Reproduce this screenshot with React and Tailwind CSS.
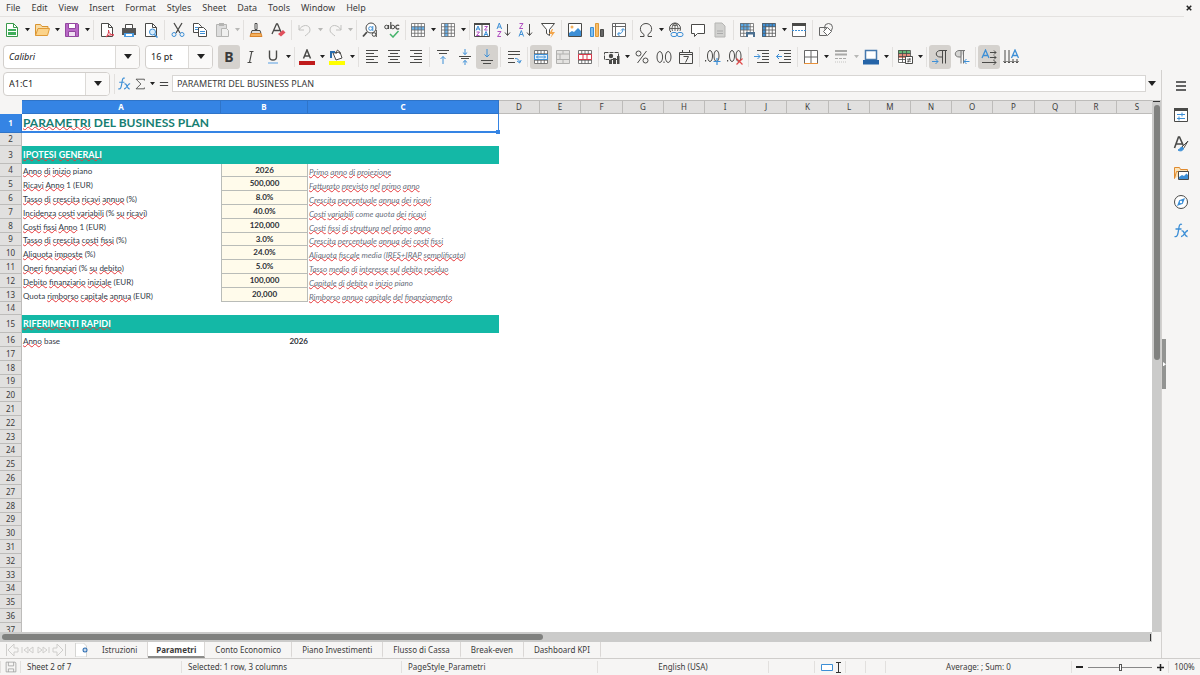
import { useState } from 'react'

const MENUS = ['File', 'Edit', 'View', 'Insert', 'Format', 'Styles', 'Sheet', 'Data', 'Tools', 'Window', 'Help']

const K = '#4a4a48' // icon outline
const B = '#3d8fd6' // icon accent

const grid = (x, y, c, r, w, h) => {
  let d = ''
  for (let i = 0; i <= c; i++) d += `M${x + i * w} ${y}v${r * h}`
  for (let i = 0; i <= r; i++) d += `M${x} ${y + i * h}h${c * w}`
  return d
}

const TABLE = grid(1.5, 1.5, 4, 4, 3.25, 3.25)

// 16x16 drawings
const ICONS = {
  new: <><path d="M2.5 1.5h7l4 4v9h-11z" fill="#fff" stroke="#3a9a4b" /><path d="M9.5 1.5v4h4" stroke="#3a9a4b" /><path d="M4 7h8v2H4zM4 10h8v3H4z" fill="#3fae5a" /></>,
  open: <><path d="M1.5 13.5V2.5h5l1.5 2h6v3" fill="#f8dca5" stroke="#d9942f" /><path d="M1.5 13.5l2.5-7h11.5l-2 7z" fill="#fbd38a" stroke="#e09a36" /></>,
  save: <><path d="M1.5 1.5h12l1 1v12h-13z" fill="#b968c7" stroke="#93479f" /><path d="M4.5 1.5h7v5h-7z" fill="#fff" stroke="#93479f" /><path d="M4.5 9.5h7v5h-7z" fill="#f0e0f3" stroke="#93479f" /></>,
  pdf: <><path d="M2.5 1.5h7l4 4v9h-11z" fill="#fff" stroke={K} /><path d="M9.5 1.5v4h4" stroke={K} /><path d="M7 15c2-2 3-5 2.5-7 0 3 2 5 5.5 5-3-.5-6 0-8 2" stroke="#d8384a" /></>,
  print: <><path d="M4.5 6V2.5h7V6" fill="#fff" stroke={K} /><path d="M1 6h14v7H1z" fill="#555" /><path d="M3 11h10v4H3z" fill="#4a9be0" /><path d="M5 12h6v2H5z" fill="#fff" /></>,
  preview: <><path d="M2.5 1.5h7l4 4v9h-11z" fill="#fff" stroke={K} /><path d="M9.5 1.5v4h4" stroke={K} /><circle cx="9.5" cy="10" r="3" fill="#d8ecfb" stroke={B} /><path d="M11.5 12.5l3 3" stroke={B} strokeWidth="1.5" /></>,
  cut: <><path d="M4 1l6 10M12 1L6 11" stroke={K} strokeWidth="1.3" /><circle cx="4" cy="12.5" r="2" stroke={B} /><circle cx="12" cy="12.5" r="2" stroke={B} /></>,
  copy: <><path d="M1.5 1.5h5l3 3v6h-8z" fill="#fff" stroke={K} /><path d="M6.5 5.5h5l3 3v6h-8z" fill="#fff" stroke={K} /><path d="M8 9.5h5M8 11.5h5M3 5.5h3M3 7.5h3" stroke={B} /></>,
  paste: <><path d="M2.5 2.5h10v12h-10z" fill="#ddd" stroke="#b5b5b3" /><path d="M5 1h5v3H5z" fill="#b5b5b3" /><path d="M7.5 6.5h5l2 2v6h-7z" fill="#f0f0ef" stroke="#b5b5b3" /></>,
  clone: <><path d="M7 1.5h2v6H7z" fill="#fff" stroke={K} /><path d="M4 8.5h8l1 3H3z" fill="#ddd" stroke={K} /><path d="M3 11.5h10l1 3H2z" fill="#f3b05d" stroke="#d9832b" /></>,
  clear: <><path d="M2 12L6.5 2h1L11 10M4 8.5h6" stroke={K} strokeWidth="1.3" /><path d="M8 12l5-4 2.5 2.5-4.5 4z" fill="#e0505c" /></>,
  undo: <path d="M2 3v5h5M2 8c3-6 11-6 11 0 0 3-3 4-5 6" stroke="#c2c2c0" />,
  redo: <path d="M14 3v5H9M14 8C11 2 3 2 3 8c0 3 3 4 5 6" stroke="#c2c2c0" />,
  find: <><circle cx="9" cy="6" r="5" fill="#fff" stroke={K} /><path d="M5 10l-4 4.5" stroke={K} strokeWidth="1.8" /><circle cx="8.5" cy="6.5" r="1.8" stroke={B} /><path d="M10.8 4v5" stroke={B} /><circle cx="12" cy="12.5" r="1.8" fill="#fff" stroke={K} /><path d="M14.3 8v7" stroke={K} /></>,
  spell: <><circle cx="2.5" cy="5" r="1.8" stroke={K} /><path d="M4.5 3v4M6.8 0v7M15.2 3.700a2 2 0 1 0 0 2.800" stroke={K} strokeWidth="1.2" /><circle cx="8.800" cy="5" r="1.800" stroke={K} /><path d="M6 12l3 3 5.500-6" stroke="#45b36b" strokeWidth="1.500" /></>,
  row: <><path d="M1 1h14v14H1z" fill="#fff" /><path d="M1.5 4.5h13v3.500h-13z" fill="#6db5ee" /><path d={TABLE} stroke="#666" strokeWidth=".8" /></>,
  col: <><path d="M1 1h14v14H1z" fill="#fff" /><path d="M4.500 1.500h3.500v13H4.500z" fill="#6db5ee" /><path d={TABLE} stroke="#666" strokeWidth=".8" /></>,
  sort: <><path d="M.5 1.500h15v13H.5zM8 3v12" fill="#fff" stroke={K} /><path d="M0 1h16v2H0z" fill={K} /><path d="M2 8.500l2-4.500 2 4.500M2.700 7h2.600M10 14l2-4.500 2 4.500M10.700 12.500h2.600" stroke={B} /><path d="M2.500 10h3l-3 3.500h3M10.500 4.500h3l-3 3.500h3" stroke="#b04fc0" /></>,
  asc: <><path d="M1 7l2.300-6L5.600 7M2 5h2.800" stroke={B} /><path d="M1.500 9.500H5l-3.500 5H5" stroke="#b04fc0" /><path d="M11.500 2v11M9 10.500l2.500 3 2.500-3" stroke={K} /></>,
  desc: <><path d="M1 14.500l2.300-6 2.300 6M2 12.500h2.800" stroke={B} /><path d="M1.500 1.500H5l-3.500 5H5" stroke="#b04fc0" /><path d="M11.500 2v11M9 10.500l2.500 3 2.500-3" stroke={K} /></>,
  filter: <><path d="M1.500 1.500h13l-5 6v6l-3-2v-4z" fill="#fff" stroke={K} /><path d="M12 7l-3 5h3l-1.500 4L15 10h-3l1-3z" fill="#f3a54a" /></>,
  image: <><path d="M1.500 1.500h13v13h-13z" fill="#fff" stroke={K} /><circle cx="5" cy="5" r="1.500" fill="#f3b05d" /><path d="M2 14v-3l3-2 2 1 4-4 3 3v5z" fill="#3d8fd6" /></>,
  chart: <><path d="M1.500 5.500h3v9h-3z" fill="#7fc0f0" stroke={B} /><path d="M6.500 1.500h3v13h-3z" fill="#f7bd6b" stroke="#e09a36" /><path d="M11.500 7.500h3v7h-3z" fill="#666" stroke={K} /></>,
  pivot: <><path d="M1.500 1.500h13v13h-13zM1.500 4.500h13M4.500 1.500v13" fill="#fff" stroke="#666" /><path d="M7 12c3 0 5-2 5-5M10 8.500l2-2 2 2M8.500 10L6.500 12l2 2" stroke={B} /></>,
  omega: <path d="M2 14.500h4v-2C0 9 2 1.500 8 1.500s8 7.500 2 11v2h4" stroke={K} />,
  link: <><circle cx="7" cy="6.500" r="5.500" stroke={K} /><path d="M1.500 6.500h11M7 1v11M3.500 2.500c2 1.500 5 1.500 7 0M7 1C3 4 3 9 7 12M7 1c4 3 4 8 0 11" stroke={K} strokeWidth=".8" /><path d="M3 9h12v6H3z" fill="#f6f5f4" /><rect x="3" y="10.500" width="6" height="4" rx="2" stroke={B} /><rect x="9" y="10.500" width="6" height="4" rx="2" stroke={B} /></>,
  comment: <path d="M1.500 2.500h13v9h-7l-3 3v-3h-3z" fill="#fff" stroke={K} />,
  header: <><path d="M3 1h7l3 3v11H3z" fill="#d2d2d0" stroke="#b5b5b3" /><path d="M5 9h6M5 11.500h6" stroke="#aaa" /></>,
  area: <><path d="M1 1h14v14H1z" fill="#fff" /><path d="M1 1h9.500v7H1z" fill="#5aa9e6" /><path d={TABLE} stroke="#666" strokeWidth=".8" /><path d="M7 10h9v5H7z" fill="#4b6f8f" /><path d="M9 12.500h5V15H9z" fill="#fff" /></>,
  freeze: <><path d="M1 1h14v14H1z" fill="#fff" /><path d="M1 1h13.500v4H5v10H1z" fill={B} /><path d={TABLE} stroke="#555" strokeWidth=".8" /></>,
  split: <><path d="M1.500 2.500h13v12h-13z" fill="#fff" stroke="#666" /><path d="M1 1h14v3H1z" fill={K} /><path d="M1 8.500h14" stroke={B} strokeDasharray="2 1" /></>,
  shapes: <><path d="M1.500 5.500h7v8h-7z" stroke="#666" /><circle cx="10.500" cy="5.500" r="4" stroke="#666" /><path d="M9.500 5.500l4 4-4 4-4-4z" fill="#fff" stroke="#666" /></>,
  italic: <path d="M6.500 2.500h4M4.500 13.500h4M8.800 2.500l-2.300 11" stroke={K} strokeWidth="1.2" />,
  underline: <><path d="M4.500 1.500V8c0 4 7 4 7 0V1.500" stroke={K} strokeWidth="1.400" /><path d="M3 14h10" stroke="#8cbbe8" strokeWidth="1.500" /></>,
  color: <><path d="M4.500 9.500L8 1l3.500 8.500M5.500 7h5" stroke={K} strokeWidth="1.500" /><path d="M0 12h16v4H0z" fill="#c01c1c" /></>,
  fill: <><path d="M4 4l7-1 2 6-6 2z" fill="#fff" stroke={K} /><path d="M7 5c0-5 3-5 4 0" stroke={K} /><path d="M2 9V3h4" stroke="#2c6fae" strokeWidth="2" /><path d="M0 12h16v4H0z" fill="#ffff00" /></>,
  left: <path d="M2 1.500h12M2 4.500h8M2 7.500h12M2 10.500h8M2 13.500h12" stroke={K} />,
  center: <path d="M2 1.500h12M4 4.500h8M2 7.500h12M4 10.500h8M2 13.500h12" stroke={K} />,
  right: <path d="M2 1.500h12M6 4.500h8M2 7.500h12M6 10.500h8M2 13.500h12" stroke={K} />,
  vtop: <><path d="M2 1.500h12M4 4.500h8" stroke={K} /><path d="M8 15V7.500M5.500 10L8 7.500l2.500 2.500" stroke={B} /></>,
  vmid: <><path d="M2 7.500h12M4 9.500h8" stroke={K} /><path d="M8 0v5.500M5.800 3.500L8 5.500l2.200-2M8 16v-4.500M5.800 13.500L8 11.500l2.200 2" stroke={B} /></>,
  vbot: <><path d="M2 11.500h12M4 14.500h8" stroke={K} /><path d="M8 0v8M5.500 5.500L8 8l2.500-2.500" stroke={B} /></>,
  wrap: <><path d="M2 2.500h12M2 5.500h12M2 9.500h6M2 13.500h7" stroke={K} /><path d="M9 9.500c3 0 4 1 4.500 4M11 12l2.700 2 1.500-3" stroke={B} /></>,
  merge: <><path d="M1 1h14v14H1z" fill="#fff" /><path d={TABLE} stroke="#555" strokeWidth=".8" /><path d="M1.500 5.500h13v5h-13z" fill="#e6f2fc" stroke={B} /><path d="M3.500 8h9M5 6.500L3.500 8 5 9.500M11 6.500L12.500 8 11 9.500" stroke={B} /></>,
  mergeDim: <><path d="M1.500 1.500h13v13h-13z" fill="#e4e3e1" stroke="#b0b0ae" /><path d="M1.500 5h13M1.500 10.500h13M8 1.500V5M8 10.500v4M5 5v5" stroke="#b0b0ae" /></>,
  unmerge: <><path d="M1 1h14v14H1z" fill="#fff" /><path d={TABLE} stroke="#555" strokeWidth=".8" /><path d="M1.500 5.500h13v5h-13zM6 5.500v5M10 5.500v5" fill="#fff" stroke="#d8384a" /></>,
  currency: <><path d="M.5 3.500h14v7H.5z" stroke={K} strokeDasharray="4 1" /><circle cx="7" cy="7" r="2.200" fill={K} /><path d="M5 11h3v4H5zM9 9h3v6H9zM13 7h2.500v8H13z" fill={K} /></>,
  percent: <><circle cx="4.500" cy="4.500" r="2.500" stroke={K} /><circle cx="11.500" cy="11.500" r="2.500" stroke={K} /><path d="M12.500 2l-9 12" stroke={K} /></>,
  number: <><ellipse cx="3.800" cy="8" rx="2.800" ry="5.500" stroke={K} /><ellipse cx="12.200" cy="8" rx="2.800" ry="5.500" stroke={K} /><path d="M7.500 12.500h1v1.500h-1z" fill={K} /></>,
  date: <><path d="M1.500 3.500h13v11h-13zM1.500 5.500h13M4.500 1v3M11.500 1v3" stroke={K} /><path d="M5.500 7.500h5l-3 6" stroke={K} /></>,
  addDec: <><path d="M0 11h1.200v1.500H0z" fill={K} /><ellipse cx="5" cy="7" rx="2.500" ry="5.500" stroke={K} /><ellipse cx="11.500" cy="7" rx="2.500" ry="5.500" stroke={K} /><path d="M12 9v7M8.500 12.500h7" stroke={B} strokeWidth="1.200" /></>,
  delDec: <><path d="M0 11h1.200v1.500H0z" fill={K} /><ellipse cx="5" cy="7" rx="2.500" ry="5.500" stroke={K} /><ellipse cx="11.500" cy="7" rx="2.500" ry="5.500" stroke={K} /><path d="M9.500 9.500l6 6M15.500 9.500l-6 6" stroke="#e04848" strokeWidth="1.200" /></>,
  indent: <><path d="M3 1.500h12M8 4.500h7M8 7.500h7M8 10.500h7M3 13.500h12" stroke={K} /><path d="M0 7.500h6M3.500 5L6 7.500 3.500 10" stroke={B} /></>,
  outdent: <><path d="M3 1.500h12M8 4.500h7M8 7.500h7M8 10.500h7M3 13.500h12" stroke={K} /><path d="M6 7.500H.5M3 5L.5 7.500 3 10" stroke={B} /></>,
  borders: <><path d="M1.500 1.500h13v13h-13z" fill="#fff" stroke="#666" /><path d="M8 1.500v13M1.500 8h13" stroke="#666" /><path d="M1 14.500h14" stroke="#e8913a" /></>,
  lines: <><path d="M2 2h12M2 5.500h12" stroke="#a9a9a7" strokeWidth="2" /><path d="M2 9.500h12" stroke="#a9a9a7" strokeDasharray="3 1" /><path d="M2 13h12" stroke="#c4c4c2" strokeDasharray="1 1" /></>,
  bcolor: <><path d="M2.500 1.500h11v9h-11z" fill="#fff" stroke="#4679ad" strokeWidth="1.500" /><path d="M0 11h16v4.500H0z" fill="#2564a8" /></>,
  cond: <><path d="M1 1h12v14H1z" fill="#fff" /><path d="M1 1h12v4H1z" fill="#67b97a" /><path d="M1 5h12v4H1z" fill="#e58b7b" /><path d={grid(1.5, 1.5, 3, 4, 4, 3)} stroke={K} strokeWidth=".8" /><path d="M8.500 7.500h7v7h-7z" fill="#fff" stroke={K} /><path d="M10 10.200h4M10 12.200h4M13 9l-2 4.500" stroke={K} strokeWidth=".8" /></>,
  ltr: <><path d="M13.500 1.500v13M10.500 14.500v-13M15 1.500H8C3 2 3 8 8 8h2.500" stroke={K} /><path d="M0 12.500h6M3.500 10L6 12.500 3.500 15" stroke={B} /></>,
  rtl: <><path d="M7 1.500v13M9.500 1.500v13M11 1.500H5C0 2 0 8 5 8h2" fill="#d5d5d3" stroke="#777" /><path d="M15.500 12.500H10M12.500 10L10 12.500l2.500 2.500" stroke={B} /></>,
  horiz: <><path d="M1 9l3.500-8L8 9M2 6.500h5" stroke={B} strokeWidth="1.300" /><path d="M9 3.500h6M13 1.500l2 2-2 2M9 8.500h6M13 6.500l2 2-2 2M1 13.500h14M12.500 11l2.500 2.500-2.500 2.500" stroke={K} /></>,
  vert: <><path d="M8.500 9L12 1l3.500 8M9.500 6.500h5" stroke={B} strokeWidth="1.300" /><path d="M2 1v13M.5 12L2 14l1.500-2M6 1v13M4.500 12L6 14l1.500-2M10 10v4M8.500 12l1.500 2 1.500-2M14 10v4M12.500 12l1.500 2 1.500-2" stroke={K} /></>,
  menu: <path d="M3 4h10M3 8h10M3 12h10" stroke="#333" strokeWidth="1.400" />,
  props: <><path d="M1.500 1.500h13v13h-13z" fill="#fff" stroke={K} /><path d="M1 1h14v3H1z" fill={K} /><path d="M4 7.500h8M9 5.500v4M4 11.500h8M6 9.500v4" stroke={B} /></>,
  styles: <><path d="M1.500 12l4-11h1l4 9M3 8h6" stroke={K} strokeWidth="1.600" /><path d="M15 5l-6 6 1.500 1.500z" fill="#fff" stroke={K} /><path d="M9 11c-2 0-2 3-4 3 2 1.500 5 1 5.500-1.500z" fill={B} stroke={B} /></>,
  gallery: <><path d="M1.500 13.500v-11h5l1 2h7v2" fill="#fbe3b8" stroke="#e08a2e" /><path d="M1.500 13.500l2-7h4" stroke="#e08a2e" /><path d="M5.500 6.500h10v8h-10z" fill="#fff" stroke={K} /><path d="M6 14v-2l3-2 2 1 2.500-2.500L15 10v4z" fill={B} /></>,
  nav: <><circle cx="8" cy="8" r="6.500" fill="#fff" stroke={K} /><path d="M12 4l-2.200 5.800L4 12l2.200-5.800z" fill={B} /><circle cx="8" cy="8" r="1.200" fill="#fff" /></>,
  fx: <><path d="M9 1.500c-3-1.500-3 3-3.500 6s-1 7-4 6M2.500 6h6" stroke={B} strokeWidth="1.300" /><path d="M8.500 8c3-1.500 2.500 6 6 5.500M15 7.500c-3 0-4 6.500-7 6" stroke={B} strokeWidth="1.300" /></>,
  sigma: <path d="M13 4V2.500H3.500L9 8l-5.500 5.500H13V12" stroke={K} />,
  equal: <path d="M2.500 6h11M2.500 10h11" stroke="#444" strokeWidth="1.500" />,
  disk: <path d="M1.500 1.500h12l1 1v12h-13zM4.500 1.500v5h7v-5M4.500 14.500v-4h7v4" stroke="#999" />,
}

const LABELS = { new: 'New', open: 'Open', save: 'Save', bold: 'Bold' }

// '|' separator, '.' tight separator, 'v' drop-down arrow, '_' disabled arrow, '*' pressed
const STANDARD = 'new v open v save v | pdf print preview | cut copy paste _ . clone clear | undo _ redo _ | find spell . row v col v . sort asc desc filter | image chart pivot | omega v link comment header | area freeze v split | shapes'.split(' ')
const FORMATTING = '*bold italic underline v . color v fill v | left center right | vtop vmid *vbot | wrap | *merge mergeDim unmerge | currency v percent number date | addDec delDec | indent outdent | borders v lines _ bcolor v . cond v | *ltr rtl | *horiz vert'.split(' ')

const SHEETS = ['Istruzioni', 'Parametri', 'Conto Economico', 'Piano Investimenti', 'Flusso di Cassa', 'Break-even', 'Dashboard KPI']
const COLS = 'ABCDEFGHIJKLMNOPQRS'.split('')
const ROWS = 37

// words between ~ marks are unknown to the spell checker
const DATA = {
  1: { title: '~PARAMETRI~ DEL BUSINESS PLAN' },
  3: { band: '~IPOTESI~ ~GENERALI~' },
  4: { a: '~Anno~ ~di~ ~inizio~ piano', b: '2026', c: '~Primo~ ~anno~ ~di~ ~proiezione~' },
  5: { a: '~Ricavi~ ~Anno~ 1 (EUR)', b: '500,000', c: '~Fatturato~ ~previsto~ ~nel~ ~primo~ ~anno~' },
  6: { a: '~Tasso~ ~di~ ~crescita~ ~ricavi~ ~annuo~ (%)', b: '8.0%', c: '~Crescita~ ~percentuale~ ~annua~ ~dei~ ~ricavi~' },
  7: { a: '~Incidenza~ ~costi~ ~variabili~ (% ~su~ ~ricavi~)', b: '40.0%', c: '~Costi~ ~variabili~ come quota ~dei~ ~ricavi~' },
  8: { a: '~Costi~ ~fissi~ ~Anno~ 1 (EUR)', b: '120,000', c: '~Costi~ ~fissi~ ~di~ ~struttura~ ~nel~ ~primo~ ~anno~' },
  9: { a: '~Tasso~ ~di~ ~crescita~ ~costi~ ~fissi~ (%)', b: '3.0%', c: '~Crescita~ ~percentuale~ ~annua~ ~dei~ ~costi~ ~fissi~' },
  10: { a: '~Aliquota~ ~imposte~ (%)', b: '24.0%', c: '~Aliquota~ ~fiscale~ media (~IRES+IRAP~ ~semplificata~)' },
  11: { a: '~Oneri~ ~finanziari~ (% ~su~ ~debito~)', b: '5.0%', c: '~Tasso~ ~medio~ ~di~ ~interesse~ ~sul~ ~debito~ ~residuo~' },
  12: { a: '~Debito~ ~finanziario~ ~iniziale~ (EUR)', b: '100,000', c: '~Capitale~ ~di~ ~debito~ a ~inizio~ piano' },
  13: { a: 'Quota ~rimborso~ ~capitale~ ~annua~ (EUR)', b: '20,000', c: '~Rimborso~ ~annuo~ ~capitale~ ~del~ ~finanziamento~' },
  15: { band: '~RIFERIMENTI~ ~RAPIDI~' },
  16: { a: '~Anno~ base', plain: '2026' },
}

const rowHeight = (n) => {
  if (n === 1) return 'h-[19px]'
  if (n === 2) return 'h-[13px]'
  if (n === 3 || n === 15) return 'h-[18px]'
  return n % 5 === 4 ? 'h-[13px]' : 'h-[14px]'
}

const Icon = ({ name, className = 'w-4 h-4' }) => (
  <svg viewBox="0 0 16 16" fill="none" className={`${className} shrink-0`} aria-hidden="true">{ICONS[name]}</svg>
)

const Arrow = ({ dim, big }) => (
  <svg viewBox="0 0 8 5" className={`${big ? 'w-2' : 'w-[5px]'} shrink-0`} aria-hidden="true">
    <path d="M0 0h8L4 5z" fill={dim ? '#b8b8b6' : '#222'} />
  </svg>
)

function Spell({ text }) {
  return text.split('~').map((part, i) => i % 2
    ? <span key={i} className="underline decoration-wavy decoration-[#e5383b] decoration-1 underline-offset-[-1px] [text-decoration-skip-ink:none]">{part}</span>
    : part)
}

function Tools({ items }) {
  return items.map((item, i) => {
    if (item === '|' || item === '.') {
      return <span key={i} className={`${item === '|' ? 'w-[5px]' : 'w-1'} h-5 flex justify-center shrink-0`}><span className="w-px bg-[#e2e0de]" /></span>
    }
    if (item === 'v' || item === '_') {
      return <button key={i} aria-label="More options" className="w-2 h-6 flex items-center justify-center shrink-0"><Arrow dim={item === '_'} /></button>
    }
    const on = item[0] === '*'
    const name = on ? item.slice(1) : item
    return (
      <button key={i} aria-label={LABELS[name] || name} className={`w-[22px] h-6 flex items-center justify-center shrink-0 rounded-[3px] ${on ? 'bg-[#d5d2ce]' : ''}`}>
        {name === 'bold' ? <span className="text-sm font-bold text-[#3a3a3a]">B</span> : <Icon name={name} />}
      </button>
    )
  })
}

function Combo({ label, value, width, italic }) {
  return (
    <div className={`${width} h-6 flex shrink-0 rounded border border-[#d2cfcc] bg-white overflow-hidden`}>
      <input aria-label={label} defaultValue={value} className={`flex-1 min-w-0 px-[5px] text-[9px] text-[#222] outline-none ${italic ? 'italic' : ''}`} />
      <button aria-label={`${label} list`} className="w-6 flex items-center justify-center border-l border-[#dcdad7] bg-[#faf9f8]"><Arrow big /></button>
    </div>
  )
}

function Row({ n }) {
  const d = DATA[n] || {}
  const selected = n === 1
  return (
    <tr className={rowHeight(n)}>
      <th scope="row" className={`border-r border-b text-[8px] leading-3 ${selected ? 'bg-[#3584e4] border-[#2f74c8] text-white font-bold' : 'bg-[#e1e0df] border-[#bdbcba] font-normal'}`}>{n}</th>
      {d.title && (
        <td colSpan={3} className="relative border-b-2 border-r border-[#3584e4] pl-px align-middle text-[12px] leading-4 font-bold text-[#177e72] font-[Lato,sans-serif]">
          <Spell text={d.title} />
          <span className="absolute -right-[2px] -bottom-[3px] w-1 h-1 bg-[#3584e4]" />
        </td>
      )}
      {d.band && (
        <td colSpan={3} className="bg-[#14b8a6] pl-px align-middle text-[9px] leading-3 font-bold text-white font-[Lato,sans-serif]"><Spell text={d.band} /></td>
      )}
      {d.a && (
        <>
          <td className="pl-px align-bottom text-[8px] leading-3 text-[#333b47] font-[Lato,sans-serif]"><Spell text={d.a} /></td>
          {d.plain
            ? <td className="align-bottom text-right text-[8px] leading-3 font-bold text-[#2b2f36] font-[Lato,sans-serif]">{d.plain}</td>
            : <td className="border-b border-x border-[#b9bcb8] bg-[#fffbeb] align-top text-center text-[8px] leading-3 font-bold text-[#2b2f36] font-[Lato,sans-serif]">{d.b}</td>}
          <td className="pl-px align-bottom text-[8px] leading-[10px] italic text-[#6b7280] font-[Lato,sans-serif]">{d.c && <Spell text={d.c} />}</td>
        </>
      )}
    </tr>
  )
}

export default function App() {
  const [sheet, setSheet] = useState('Parametri')

  return (
    <div className="h-screen flex flex-col overflow-hidden bg-[#f6f5f4] text-[#3b3b3b] font-['Noto_Sans',sans-serif]">
      {/* Menu bar */}
      <nav className="h-4 flex items-center shrink-0 gap-px pl-px text-[9px] leading-4">
        {MENUS.map(m => <button key={m} className="px-[5px]">{m}</button>)}
        <button aria-label="Close document" className="ml-auto w-[22px] flex justify-center">
          <svg viewBox="0 0 8 8" className="w-[6px]" aria-hidden="true"><path d="M1 1l6 6M7 1L1 7" stroke="#222" strokeWidth="2" /></svg>
        </button>
      </nav>

      <div className="h-[27px] flex items-center shrink-0 pl-px mr-4 border-t border-[#e4e2e0]"><Tools items={STANDARD} /></div>
      <div className="h-[27px] flex items-center shrink-0 pl-[3px]">
        <Combo label="Font name" value="Calibri" width="w-[137px]" italic />
        <span className="w-[5px] shrink-0" />
        <Combo label="Font size" value="16 pt" width="w-[68px]" />
        <span className="w-[5px] shrink-0" />
        <Tools items={FORMATTING} />
      </div>

      <div className="flex-1 min-h-0 flex">
        <main className="flex-1 min-w-0 flex flex-col">
          {/* Formula bar */}
          <div className="h-[27px] flex items-center shrink-0 pl-[3px]">
            <Combo label="Name box" value="A1:C1" width="w-[107px]" />
            <span className="w-px h-5 ml-1 mr-px bg-[#e2e0de]" />
            <button aria-label="Function wizard" className="w-4 flex justify-center"><Icon name="fx" className="w-[14px] h-[14px]" /></button>
            <button aria-label="Select function" className="w-4 flex justify-center"><Icon name="sigma" className="w-[14px] h-[14px]" /></button>
            <button aria-label="Function list" className="w-2 flex justify-center"><Arrow /></button>
            <button aria-label="Formula" className="w-4 flex justify-center"><Icon name="equal" className="w-3 h-3" /></button>
            <input aria-label="Input line" defaultValue="PARAMETRI DEL BUSINESS PLAN" className="flex-1 min-w-0 h-[17px] px-1 bg-white border border-[#d8d6d4] text-[9px] outline-none" />
            <button aria-label="Expand formula bar" className="w-3 flex justify-center"><Arrow big /></button>
            <span className="w-[3px]" />
          </div>

          {/* Sheet grid */}
          <div className="flex-1 min-h-0 flex pt-[3px]">
            <div className="flex-1 min-w-0 overflow-hidden bg-white">
              <table className="table-fixed w-0 border-separate border-spacing-0 whitespace-nowrap">
                <colgroup>
                  <col className="w-[22px]" />
                  <col className="w-[199px]" />
                  <col className="w-[87px]" />
                  <col className="w-[191px]" />
                  {COLS.slice(3).map((c, i) => <col key={c} className={i % 5 === 2 ? 'w-[42px]' : 'w-[41px]'} />)}
                </colgroup>
                <thead>
                  <tr className="h-[14px]">
                    <td className="bg-[#f6f5f4]" />
                    {COLS.map((c, i) => (
                      <th key={c} scope="col" className={`border-r border-y text-[8px] leading-3 ${i < 3 ? 'bg-[#3584e4] border-[#2f74c8] text-white font-bold' : 'bg-[#e1e0df] border-[#bdbcba] font-normal'}`}>{c}</th>
                    ))}
                  </tr>
                </thead>
                <tbody>
                  {Array.from({ length: ROWS }, (_, i) => <Row key={i} n={i + 1} />)}
                </tbody>
              </table>
            </div>
            <div className="w-[9px] shrink-0 flex flex-col items-center bg-[#cbcbca]">
              <span className="w-[7px] h-px mt-px mb-[3px] bg-[#333]" />
              <span className="w-[6px] h-[48%] rounded-full bg-[#80817f]" />
            </div>
          </div>
          <div className="h-[10px] shrink-0 flex">
            <div className="flex-1 flex items-center justify-between pl-0.5 bg-[#cbcbca]">
              <span className="w-[47%] h-[6px] rounded-full bg-[#80817f]" />
              <span className="w-px h-[7px] mr-px bg-[#333]" />
            </div>
            <span className="w-[9px]" />
          </div>

          {/* Sheet tabs */}
          <div className="h-4 flex shrink-0 text-[8px] leading-[13px]">
            <div className="w-[74px] flex items-center pl-1">
              <svg viewBox="0 0 64 14" className="w-16 h-[14px]" fill="none" stroke="#cfcecc" aria-hidden="true">
                <path d="M2.500 1v12M10 1L4 7l6 6V9h4V5h-4zM18 4v6M24 4l-4 3 4 3zM29 4l-4 3 4 3zM34 4v6l4-3zM39 4v6l4-3zM45 4v6M53 1l6 6-6 6V9h-4V5h4zM61.500 1v12" />
              </svg>
            </div>
            <button aria-label="Add sheet" className="w-[18px] flex items-center">
              <svg viewBox="0 0 14 14" className="w-[14px] h-[14px]" fill="none" aria-hidden="true">
                <path d="M1.500 0h8l3 3v11h-11z" fill="#fff" stroke="#d5d5d3" />
                <circle cx="11" cy="7" r="2.500" fill="#2f6fb3" /><path d="M11 5.500v3M9.500 7h3" stroke="#fff" />
              </svg>
            </button>
            {SHEETS.map(s => (
              <button
                key={s}
                onClick={() => setSheet(s)}
                className={`border-r border-r-[#dad7d5] border-b-2 ${s === sheet ? 'px-2 bg-white font-bold border-b-[#8b8b89]' : 'px-[10px] border-b-transparent'}`}
              >
                {s}
              </button>
            ))}
          </div>
        </main>

        {/* Sidebar */}
        <aside className="relative w-[39px] shrink-0 flex flex-col items-center pt-[7px] gap-[11px] border-l border-[#d3d1cf]">
          {['menu', 'props', 'styles', 'gallery', 'nav', 'fx'].map(name => (
            <button key={name} aria-label={name} className="h-[18px] flex items-center"><Icon name={name} /></button>
          ))}
          <button aria-label="Hide sidebar" className="absolute left-0 top-[269px] w-[4px] h-[50px] flex items-center justify-center bg-[#939492]">
            <svg viewBox="0 0 4 6" className="w-[3px]" aria-hidden="true"><path d="M0 0l4 3-4 3z" fill="#fff" /></svg>
          </button>
        </aside>
      </div>

      {/* Status bar */}
      <footer className="h-[17px] shrink-0 grid grid-cols-[20px_161fr_220fr_196fr_171fr_46fr_31px_20px_20px_186fr_97px_32px] items-center border-t border-[#cfcdcb] text-[8px] leading-3 whitespace-nowrap *:h-3 *:border-l *:border-[#e2e0de]">
        <span className="flex items-center justify-center"><Icon name="disk" className="w-3 h-3" /></span>
        <span className="pl-[6px]">Sheet 2 of 7</span>
        <span className="pl-[6px]">Selected: 1 row, 3 columns</span>
        <span className="pl-[6px]">PageStyle_Parametri</span>
        <span className="text-center">English (USA)</span>
        <span />
        <span className="flex items-center justify-start gap-[3px]">
          <svg viewBox="0 0 12 7" className="w-3 ml-[6px]" aria-hidden="true"><path d="M.5.5h11v6H.5z" fill="#fff" stroke={B} /></svg>
          <svg viewBox="0 0 5 11" className="w-[5px]" fill="none" aria-hidden="true"><path d="M0 .5h5M2.500.5v10M0 10.500h5" stroke="#333" /></svg>
        </span>
        <span />
        <span />
        <span className="text-center">Average: ; Sum: 0</span>
        <span className="flex items-center justify-center gap-[5px]">
          <button aria-label="Zoom out" className="w-[7px] h-0.5 bg-[#222]" />
          <input type="range" aria-label="Zoom" min="0" max="100" defaultValue="50" className="w-16 h-px appearance-none bg-[#888] [&::-webkit-slider-thumb]:appearance-none [&::-webkit-slider-thumb]:w-[3px] [&::-webkit-slider-thumb]:h-[7px] [&::-webkit-slider-thumb]:bg-white [&::-webkit-slider-thumb]:border [&::-webkit-slider-thumb]:border-[#555]" />
          <button aria-label="Zoom in">
            <svg viewBox="0 0 7 7" className="w-[7px]" aria-hidden="true"><path d="M0 3.500h7M3.500 0v7" stroke="#222" strokeWidth="1.500" /></svg>
          </button>
        </span>
        <span className="text-center">100%</span>
      </footer>
    </div>
  )
}
